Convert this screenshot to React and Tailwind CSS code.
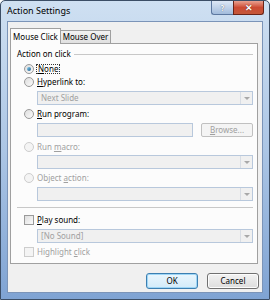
import React from "react";

const F = { fontFamily: '"Segoe UI", "Noto Sans", "Open Sans", sans-serif' };

function Radio({ checked, disabled }) {
  return (
    <span
      className={
        "relative inline-block w-[10px] h-[10px] rounded-full border shrink-0 " +
        (disabled
          ? "border-[#cdcdcd] bg-[#f4f4f4]"
          : "border-[#9a9a9a] bg-gradient-to-br from-[#dedede] to-[#fafafa]")
      }
    >
      {checked && (
        <span className="absolute left-[2px] top-[2px] w-[4px] h-[4px] rounded-full bg-gradient-to-br from-[#8ad2f2] to-[#1c5e8e]" />
      )}
    </span>
  );
}

function Check({ disabled }) {
  return (
    <span
      className={
        "inline-block w-[10px] h-[10px] border shrink-0 " +
        (disabled ? "border-[#cdcdcd] bg-[#f4f4f4]" : "border-[#9a9a9a] bg-gradient-to-br from-[#dedede] to-[#fbfbfb]")
      }
    />
  );
}

function Combo({ text, mt }) {
  return (
    <div className={"ml-[26px] w-[216px] h-[14px] border border-[#b8c8dc] bg-[#f0f0f0] flex items-center " + mt}>
      <span className="flex-1 pl-[3px] text-[#a0a0a0] text-[8px] leading-none">{text}</span>
      <span className="w-[12px] h-full border-l border-[#d8dde4] flex items-center justify-center">
        <span className="w-0 h-0 border-l-[3px] border-r-[3px] border-t-[3px] border-l-transparent border-r-transparent border-t-[#a8a8a8]" />
      </span>
    </div>
  );
}

function Row({ children, mt }) {
  return <div className={"h-[12px] flex items-center gap-[2px] ml-[13px] text-[8px] leading-none " + mt}>{children}</div>;
}

export default function App() {
  return (
    <div
      style={F}
      className="w-[270px] h-[300px] relative overflow-hidden rounded-t-[5px] border border-[#3c4e66] bg-gradient-to-b from-[#cfe0f2] via-[#acc6e5] to-[#7fa3d3] flex flex-col"
    >
      {/* title bar */}
      <div className="h-[20px] flex items-start shrink-0">
        <div className="flex-1 pl-[6px] pt-[5px] text-[9px] leading-none text-black">Action Settings</div>
        <div className="flex mr-[5px]">
          <div className="w-[22px] h-[14px] rounded-bl-[3px] border border-[#5d78a0] border-t-0 border-r-0 bg-gradient-to-b from-[#dde8f6] to-[#a3bcdc] flex items-center justify-center text-[8px] text-white font-bold leading-none [text-shadow:0_0_1px_#2a3c5a]">
            ?
          </div>
          <div className="w-[31px] h-[14px] rounded-br-[3px] border border-[#6a2418] border-t-0 bg-gradient-to-b from-[#e8a090] via-[#cc4a33] to-[#c4583a] flex items-center justify-center text-[9px] text-white font-bold leading-none [text-shadow:0_0_1px_#3a0a00]">
            ✕
          </div>
        </div>
      </div>
      {/* client */}
      <div className="mx-[6px] h-[272px] border border-[#7b94b8] bg-[#f0f0f0] pl-[2px] flex flex-col">
        {/* tabs */}
        <div className="h-[21px] flex items-end shrink-0">
          <div className="h-[16px] w-[51px] border border-b-0 border-[#a0a0a0] bg-[#fcfcfc] text-[8px] leading-none flex items-center justify-center relative top-[1px] z-10">
            Mouse Click
          </div>
          <div className="h-[13px] w-[50px] border border-l-0 border-b-0 border-[#a0a0a0] bg-gradient-to-b from-[#f2f2f2] to-[#e0e0e0] text-[8px] leading-none flex items-center justify-center">
            Mouse Over
          </div>
        </div>
        {/* panel */}
        <div className="w-[248px] h-[221px] border border-[#a0a0a0] bg-[#fcfcfc] flex flex-col">
          <div className="mt-[4px] h-[12px] flex items-center ml-[6px] mr-[4px] text-[8px] leading-none">
            <span>Action on click</span>
            <span className="flex-1 ml-[3px] h-px bg-[#c8c8c8]" />
          </div>
          <Row mt="mt-[3px]">
            <Radio checked />
            <span className="px-[1px] border border-dotted border-[#333]">
              <span className="underline">N</span>one
            </span>
          </Row>
          <Row mt="mt-[1px]">
            <Radio />
            <span className="ml-[1px]">
              <span className="underline">H</span>yperlink to:
            </span>
          </Row>
          <Combo text="Next Slide" mt="mt-[3px]" />
          <Row mt="mt-[3px]">
            <Radio />
            <span className="ml-[1px]">
              <span className="underline">R</span>un program:
            </span>
          </Row>
          <div className="mt-[3px] ml-[26px] flex gap-[8px]">
            <div className="w-[156px] h-[14px] border border-[#b8c8dc] bg-[#f0f0f0]" />
            <div className="w-[52px] h-[14px] border border-[#c0c0c0] rounded-[2px] bg-[#f4f4f4] text-[#a0a0a0] text-[8px] leading-none flex items-center justify-center">
              <span>
                <span className="underline">B</span>rowse...
              </span>
            </div>
          </div>
          <Row mt="mt-[4px]">
            <Radio disabled />
            <span className="ml-[1px] text-[#a0a0a0]">
              Run <span className="underline">m</span>acro:
            </span>
          </Row>
          <Combo text="" mt="mt-[2px]" />
          <Row mt="mt-[3px]">
            <Radio disabled />
            <span className="ml-[1px] text-[#a0a0a0]">
              Object <span className="underline">a</span>ction:
            </span>
          </Row>
          <Combo text="" mt="mt-[3px]" />
          <div className="mt-[6px] ml-[6px] mr-[4px] h-px bg-[#c8c8c8]" />
          <Row mt="mt-[6px]">
            <Check />
            <span className="ml-[1px]">
              <span className="underline">P</span>lay sound:
            </span>
          </Row>
          <Combo text="[No Sound]" mt="mt-[3px]" />
          <Row mt="mt-[3px]">
            <Check disabled />
            <span className="ml-[1px] text-[#a0a0a0]">
              Highlight <span className="underline">c</span>lick
            </span>
          </Row>
        </div>
        {/* buttons */}
        <div className="mt-[9px] flex justify-end gap-[9px] pr-[3px]">
          <div className="w-[52px] h-[16px] rounded-[3px] border border-[#3c7fb1] bg-gradient-to-b from-[#eaf6fd] to-[#d3ebf9] shadow-[inset_0_0_0_1px_#9fd6f6] text-[8px] leading-none flex items-center justify-center">
            OK
          </div>
          <div className="w-[52px] h-[16px] rounded-[3px] border border-[#707070] bg-gradient-to-b from-[#f2f2f2] to-[#dddddd] shadow-[inset_0_0_0_1px_#fcfcfc] text-[8px] leading-none flex items-center justify-center">
            Cancel
          </div>
        </div>
      </div>
    </div>
  );
}
